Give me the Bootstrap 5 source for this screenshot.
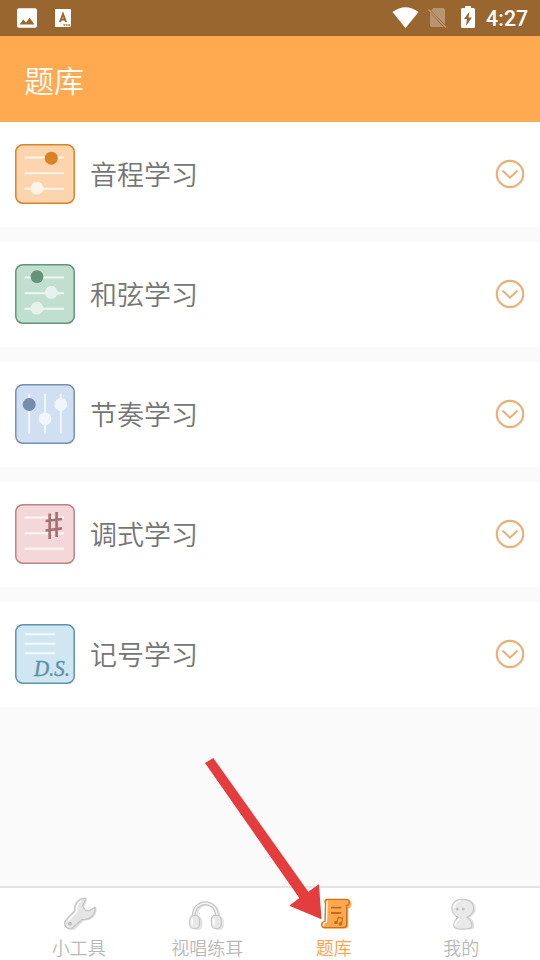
<!DOCTYPE html>
<html lang="zh-CN">
<head>
<meta charset="utf-8">
<meta name="viewport" content="width=device-width, initial-scale=1">
<title>题库</title>
<link href="https://cdn.jsdelivr.net/npm/bootstrap@5.3.0/dist/css/bootstrap.min.css" rel="stylesheet">
<style>
body{font-family:"Noto Sans CJK SC",sans-serif;font-weight:350;background:#fafafa;color:#757575}
.screen{width:540px;height:960px}
.statusbar{height:36px;background:#99662f}
.clock{font:500 21.3px/38px Roboto,sans-serif;letter-spacing:.1px;width:55px;padding-left:1px}
.titlebar{height:86px;background:#ffa951;padding:0 24px;font-size:30px;line-height:1}
.topics{gap:15px}
.topic{height:105px;padding:0 15px 1px}
.topic-name{font-size:27px;line-height:40px;margin-left:15px}
.tabs{height:74px;border-top:2px solid #e4e4e4;padding:7px 15px 0}
.tab{color:#b8b8b8;font-size:18px;line-height:26px;text-decoration:none}
.tab.active{color:#ffa04a}
.tab svg{display:block;margin-bottom:4px}
.tab-label{padding-left:2px}
.pointer{left:0;top:750px;pointer-events:none}
</style>
<script src="https://cdn.jsdelivr.net/npm/bootstrap@5.3.0/dist/js/bootstrap.bundle.min.js" defer></script>
</head>
<body>
<div class="screen d-flex flex-column position-relative overflow-hidden">
<div class="statusbar d-flex justify-content-between text-white flex-shrink-0">
<svg width="90" height="36" viewBox="0 0 90 36"><rect x="17" y="8.300" width="20" height="19.500" rx="2" fill="#fff"/><path d="M19.500 24.500 23.300 19.500 26 22.500 29.600 17.800 34.500 24.500Z" fill="#99662f"/><rect x="55" y="9" width="16" height="18" rx="1" fill="#fff"/><path d="M60 22 63 14 66 22M61 19.500h4" fill="none" stroke="#99662f" stroke-width="2"/><path d="M63.500 25h6.500" stroke="#99662f" stroke-width="1.500" stroke-dasharray="1.600 .8"/></svg>
<div class="d-flex">
<svg width="95" height="36" viewBox="390 0 95 36"><path d="M392.500 12Q405.500 2.500 418.500 12L405.500 28Z" fill="#fff"/><path d="M433.500 8H443q2 0 2 2v14.500L431 10.500zM430 12.500 443.500 27H432q-2 0-2-2z" fill="#b89470"/><path d="M428.500 9.500 446 27.500" stroke="#b89470" stroke-width="1.700"/><path d="M461 9.500q0-1.500 1.500-1.500H465V6h6v2h2.500q1.500 0 1.500 1.500v17q0 1.500-1.500 1.500h-11q-1.500 0-1.500-1.500z" fill="#fff"/><path d="M469.500 11.500 464 19h3l-1 7 6-8.500h-3.500z" fill="#99662f"/></svg>
<div class="clock">4:27</div>
</div>
</div>
<header class="titlebar d-flex align-items-center text-white flex-shrink-0">题库</header>
<main class="topics d-flex flex-column">
<div class="topic bg-white d-flex align-items-center">
<svg width="60" height="60" viewBox="0 0 60 60"><rect x=".8" y=".8" width="58.400" height="58.400" rx="7" fill="#fcd4ae" stroke="#d98324" stroke-width="1.500"/><path d="M9.500 13.500h39.500M9.500 29.200h39.500M9.500 44.700h39.500" stroke="#fff4ea" stroke-width="2"/><circle cx="36.300" cy="14.200" r="6.500" fill="#d98324"/><circle cx="22" cy="44.200" r="6.400" fill="#fff4ea"/></svg>
<div class="topic-name flex-grow-1">音程学习</div>
<svg width="30" height="30" viewBox="0 0 30 30" fill="none" stroke="#ebb078"><circle cx="15" cy="15" r="13.200" stroke-width="2.200"/><path d="M7.500 11.500 15 18.700 22.500 11.500" stroke-width="2"/></svg>
</div>
<div class="topic bg-white d-flex align-items-center">
<svg width="60" height="60" viewBox="0 0 60 60"><rect x=".8" y=".8" width="58.400" height="58.400" rx="7" fill="#c0dfce" stroke="#63937a" stroke-width="1.500"/><path d="M9.500 13.500h39.500M9.500 29.200h39.500M9.500 44.700h39.500" stroke="#f0f7f3" stroke-width="2"/><circle cx="22" cy="12.600" r="6.400" fill="#63937a"/><circle cx="36.300" cy="28.500" r="6.400" fill="#e8f2ed"/><circle cx="22" cy="44.200" r="6.400" fill="#e8f2ed"/></svg>
<div class="topic-name flex-grow-1">和弦学习</div>
<svg width="30" height="30" viewBox="0 0 30 30" fill="none" stroke="#ebb078"><circle cx="15" cy="15" r="13.200" stroke-width="2.200"/><path d="M7.500 11.500 15 18.700 22.500 11.500" stroke-width="2"/></svg>
</div>
<div class="topic bg-white d-flex align-items-center">
<svg width="60" height="60" viewBox="0 0 60 60"><rect x=".8" y=".8" width="58.400" height="58.400" rx="7" fill="#d0dff2" stroke="#7790b1" stroke-width="1.500"/><path d="M14.200 10v39.500M30 10v39.500M45.800 10v39.500" stroke="#f1f6fd" stroke-width="2"/><circle cx="14.200" cy="20.500" r="6.500" fill="#768cab"/><circle cx="30" cy="34.800" r="6.400" fill="#f1f6fd"/><circle cx="45.800" cy="20.500" r="6.400" fill="#f1f6fd"/></svg>
<div class="topic-name flex-grow-1">节奏学习</div>
<svg width="30" height="30" viewBox="0 0 30 30" fill="none" stroke="#ebb078"><circle cx="15" cy="15" r="13.200" stroke-width="2.200"/><path d="M7.500 11.500 15 18.700 22.500 11.500" stroke-width="2"/></svg>
</div>
<div class="topic bg-white d-flex align-items-center">
<svg width="60" height="60" viewBox="0 0 60 60"><rect x=".8" y=".8" width="58.400" height="58.400" rx="7" fill="#f4d8d9" stroke="#b98486" stroke-width="1.500"/><path d="M9.500 13.500h39.500M9.500 29.200h39.500M9.500 44.700h39.500" stroke="#fff5f5" stroke-width="2"/><path d="M34.700 9.500v25.500M41.600 8v25M30.500 17 47 15M30.500 26.500 47 24.300" fill="none" stroke="#a57173" stroke-width="2.700"/></svg>
<div class="topic-name flex-grow-1">调式学习</div>
<svg width="30" height="30" viewBox="0 0 30 30" fill="none" stroke="#ebb078"><circle cx="15" cy="15" r="13.200" stroke-width="2.200"/><path d="M7.500 11.500 15 18.700 22.500 11.500" stroke-width="2"/></svg>
</div>
<div class="topic bg-white d-flex align-items-center">
<svg width="60" height="60" viewBox="0 0 60 60"><rect x=".8" y=".8" width="58.400" height="58.400" rx="7" fill="#d0e6f0" stroke="#5f93ad" stroke-width="1.500"/><path d="M9.500 10.300h31M9.500 19.800h31M9.500 29.200h31" stroke="#f2fafd" stroke-width="2"/><text x="19" y="52.200" textLength="36" lengthAdjust="spacingAndGlyphs" font-family="Liberation Serif,serif" font-style="italic" font-size="22.500" fill="#5c90aa" stroke="#5c90aa" stroke-width=".4">D.S.</text></svg>
<div class="topic-name flex-grow-1">记号学习</div>
<svg width="30" height="30" viewBox="0 0 30 30" fill="none" stroke="#ebb078"><circle cx="15" cy="15" r="13.200" stroke-width="2.200"/><path d="M7.500 11.500 15 18.700 22.500 11.500" stroke-width="2"/></svg>
</div>
</main>
<nav class="tabs bg-white d-flex mt-auto flex-shrink-0">
<a class="tab col-3 d-flex flex-column align-items-center">
<svg width="40" height="36" viewBox="58.750 895 40 36" stroke-linejoin="round"><path d="M86 898.500C79 897.500 73.500 903 74.500 911L65.500 920.500C61.500 925.500 67 932 73 929.500L82.500 920C90 921.500 95.500 915 95.500 907.500L88.500 912Q83.500 911 82.500 906Z" transform="translate(1.500 1)" fill="#dedede"/><path d="M86 898.500C79 897.500 73.500 903 74.500 911L65.500 920.500C61.500 925.500 67 932 72 929L82 920C90 921.500 95.500 915 95.500 907.500L88.500 911.500Q83.500 911 82.500 906Z" fill="#e5e5e5" stroke="#c6c6c6" stroke-width="1.300"/><path d="M81 901Q75.500 904.500 76.500 912L67.500 921.500" fill="none" stroke="#fff" stroke-width="1.400"/><circle cx="69.500" cy="924.500" r="2" fill="#bdbdbd"/></svg>
小工具</a>
<a class="tab col-3 d-flex flex-column align-items-center">
<svg width="40" height="36" viewBox="186.250 895 40 36" fill="none"><path d="M195.500 917C195.500 900 219 900 219 917" stroke="#e6e6e6" stroke-width="4"/><rect x="192" y="917" width="10.500" height="14" rx="4.500" fill="#e2e2e2"/><rect x="214" y="917" width="10.500" height="14" rx="4.500" fill="#e2e2e2"/><path d="M193.500 917C193.500 899 217.500 899 217.500 917" stroke="#c6c6c6" stroke-width="4"/><path d="M193.500 917C193.500 899 217.500 899 217.500 917" stroke="#f5f5f5" stroke-width="1.600"/><g fill="#e8e8e8" stroke="#c6c6c6" stroke-width="1.200"><rect x="189.500" y="916" width="10" height="13.500" rx="4.500"/><rect x="211.800" y="916" width="10" height="13.500" rx="4.500"/></g><path d="M192 919.500v6M214.300 919.500v6" stroke="#fff" stroke-width="1.800"/></svg>
<span class="tab-label">视唱练耳</span></a>
<a class="tab active col-3 d-flex flex-column align-items-center">
<svg width="40" height="36" viewBox="313.750 895 40 36" fill="none" stroke-linejoin="round" stroke-linecap="round"><path d="M329 901H349C353 901 352.500 908 348.500 909V926Q348.500 929.500 345 929.500H323Z" fill="#ffa54b"/><path d="M326 899.500H346.500Q350 899.500 349.500 903 349.500 905.500 346.800 905.800V925Q346.800 928.500 343 928.500H323.500Q320.800 928.500 321 925 321.200 922.500 324.500 922L325 904Q323.500 901 326 899.500Z" fill="#ffa850" stroke="#c8731b" stroke-width="1.300"/><path d="M327 901.500Q326.500 903 326.500 905L326 923Q322.500 923.500 322.800 926.500" stroke="#fff" stroke-width="1.300"/><path d="M331.500 908h9M331.500 913.500h9" stroke="#c16d18" stroke-width="2"/><path d="M336.800 923.500 338 918 342.500 918.800 341.500 924.500" stroke="#c16d18" stroke-width="1.200"/><circle cx="335.700" cy="923.300" r="1.800" fill="#c16d18"/><circle cx="340.300" cy="924.800" r="1.800" fill="#c16d18"/></svg>
题库</a>
<a class="tab col-3 d-flex flex-column align-items-center">
<svg width="40" height="36" viewBox="441.250 895 40 36"><path d="M465 899.500C478 899.500 480 913 470.500 918 476 923 477 930.500 471 930.500H457Z" fill="#dfdfdf"/><path d="M463 899.500C449.500 899.500 448.500 913.500 458.500 918 453 922 452 929 457 929.500Q463 930.800 469 929.500C474.500 929 473 922 467.500 918 477.500 913.500 476.500 899.500 463 899.500Z" fill="#e9e9e9" stroke="#c8c8c8" stroke-width="1.200"/><path d="M454 909C453.500 904 457 901.500 461 901.200M459.500 919.500Q455.500 922 455.300 926" fill="none" stroke="#fff" stroke-width="1.500"/><circle cx="457.200" cy="909.500" r="1.500" fill="#bebebe"/><circle cx="463.500" cy="909.500" r="1.500" fill="#bebebe"/></svg>
我的</a>
</nav>
<svg class="pointer position-absolute" width="340" height="175" viewBox="0 750 340 175"><path d="M205 763 213.300 758 308.300 891.700 319 884.300 321.500 919.300 289.300 905.700 299.300 898Z" fill="#e53d3d"/></svg>
</div>
</body>
</html>
